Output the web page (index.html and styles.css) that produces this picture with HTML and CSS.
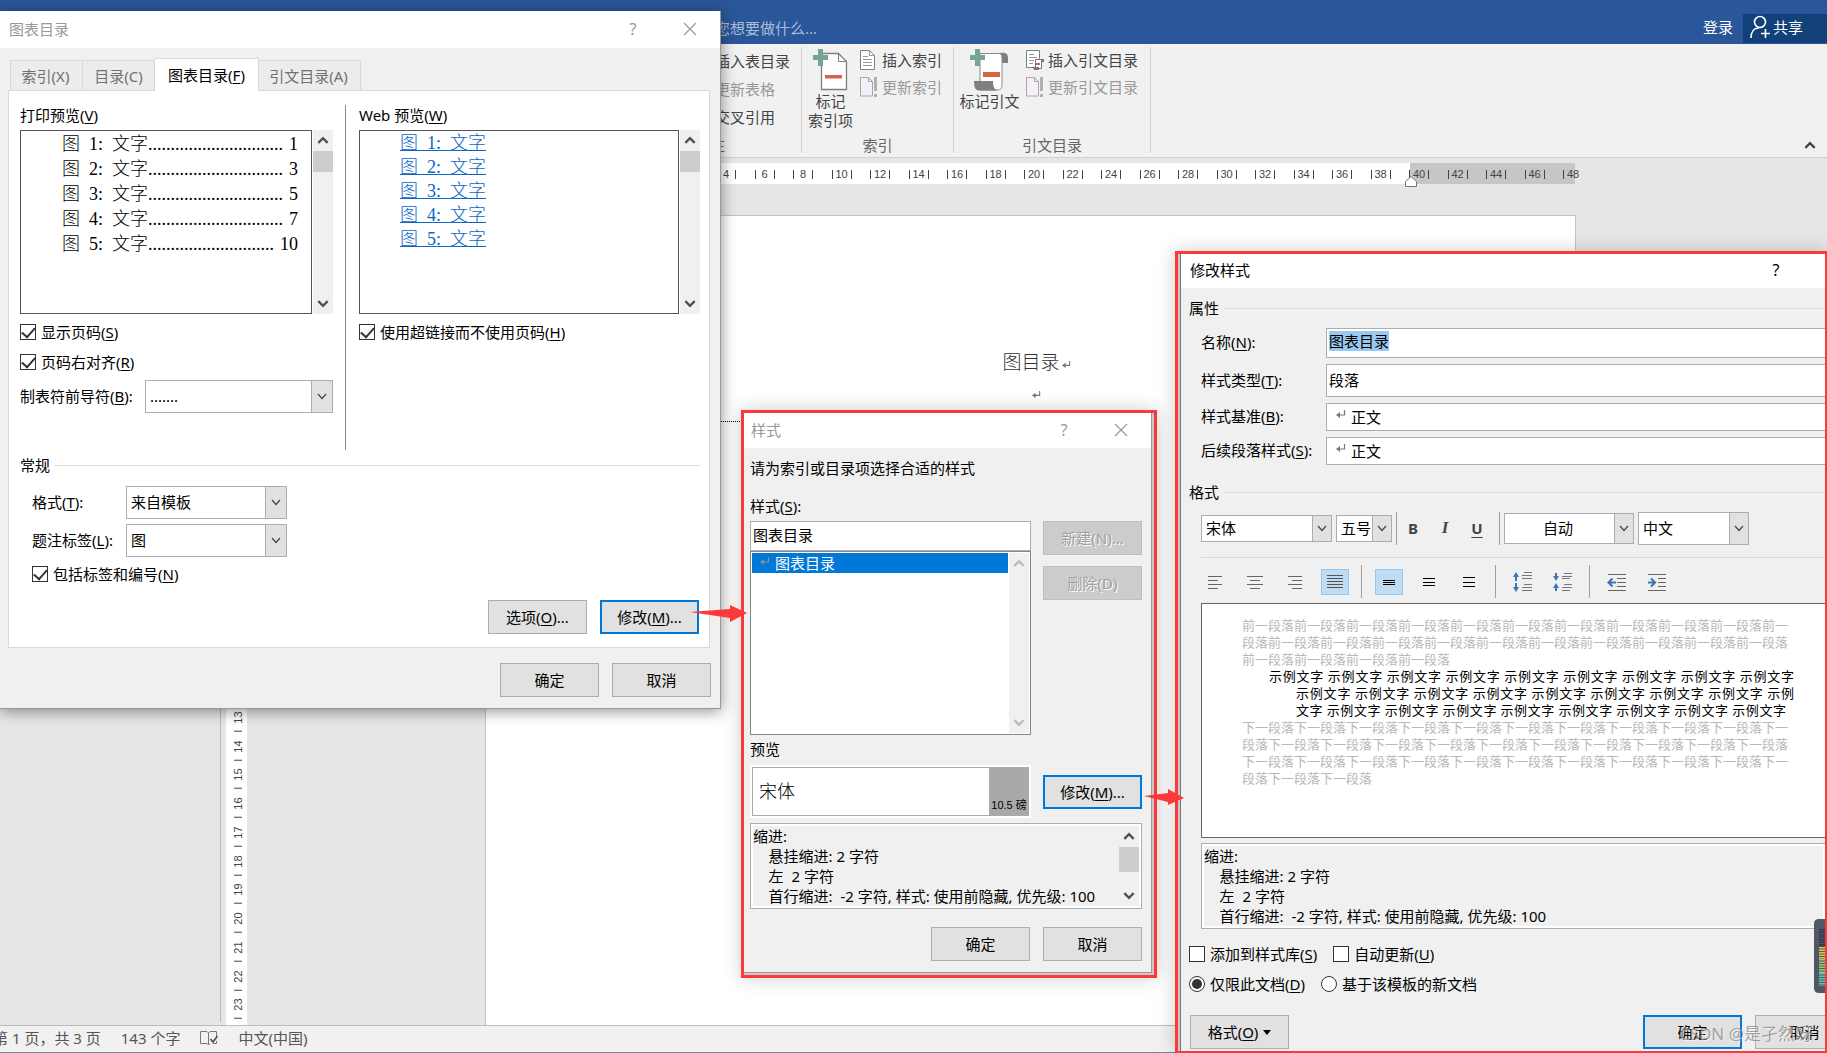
FILE: index.html
```html
<!DOCTYPE html>
<html lang="zh-CN">
<head>
<meta charset="utf-8">
<title>图表目录</title>
<link rel="stylesheet" href="styles.css">
</head>
<body>
<svg class="defs" aria-hidden="true">
  <symbol id="up" viewBox="0 0 12 12"><path d="M2 8.500 6 4.500l4 4" fill="none" stroke="currentColor" stroke-width="2"/></symbol>
  <symbol id="down" viewBox="0 0 12 12"><path d="M2 3.500 6 7.500l4-4" fill="none" stroke="currentColor" stroke-width="2"/></symbol>
  <symbol id="drop" viewBox="0 0 12 12"><path d="M2 3.500 6 8l4-4.500" fill="none" stroke="currentColor" stroke-width="1.200"/></symbol>
  <symbol id="close" viewBox="0 0 14 14"><path d="M1 1l12 12M13 1 1 13" fill="none" stroke="currentColor" stroke-width="1.200"/></symbol>
  <symbol id="ret" viewBox="0 0 10 10"><path d="M8.500 1v5H2" fill="none" stroke="currentColor" stroke-width="1.200"/><path d="M4 3v6L0 6z" fill="currentColor"/></symbol>
  <symbol id="update" viewBox="0 0 20 22"><path d="M1.500 1.500h8l4 4v14.500h-12z" fill="#f5eff7" stroke="#aaa5ab"/><path d="M9.500 1.500v4h4" fill="none" stroke="#aaa5ab"/><path d="M15 1h3v14h-3zM15 18h3v3h-3z" fill="#b0b0b0"/></symbol>
</svg>

<div class="word">
  <header class="titlebar">
    <span class="tell">您想要做什么...</span>
    <button class="signin">登录</button>
    <button class="share"><svg width="20" height="24" viewBox="0 0 20 24" fill="none" stroke="#fff" stroke-width="1.600"><circle cx="10" cy="7" r="5.500"/><path d="M1 23c0-6 3-10 8-10M15.500 14v9M11 18.500h9"/></svg>共享</button>
  </header>

  <div class="ribbon">
    <section class="group captions">
      <div class="tools"><button class="tool">插入表目录</button><button class="tool off">更新表格</button><button class="tool">交叉引用</button></div>
      <h2>题注</h2>
    </section>
    <section class="group index">
      <div class="cols">
        <button class="big"><svg width="36" height="44" viewBox="0 0 36 44"><path d="M8.500 5.500h17l8 8v28h-25z" fill="#fff" stroke="#7f7f7f" stroke-width="1.300"/><path d="M25.500 5.500v8h8" fill="none" stroke="#7f7f7f"/><path d="M12 27h17v3.500H12z" fill="#d86344"/><path d="M5 1h5v6h5v5h-5v6H5v-6H0V7h5z" fill="#75a694"/></svg><span>标记<br>索引项</span></button>
        <div class="tools">
          <button class="tool"><svg width="18" height="22" viewBox="0 0 18 22"><path d="M1.500 1.500h9l5 5v14h-14z" fill="#fff" stroke="#7f7f7f"/><path d="M10.500 1.500v5h5M4 7.500h5M4 10.500h9M4 13.500h9M4 16.500h9" fill="none" stroke="#999"/></svg>插入索引</button>
          <button class="tool off"><svg width="20" height="22"><use href="#update"/></svg>更新索引</button>
        </div>
      </div>
      <h2>索引</h2>
    </section>
    <section class="group cites">
      <div class="cols">
        <button class="big"><svg width="40" height="44" viewBox="0 0 40 44"><path d="M29 5c6-1 9 0 9 5v5h-6V9c0-2-1-3-3-4z" fill="#7f7f7f"/><path d="M9.500 5.500H30c1.500 1 2 3 2 5V37c0 3-1 5-5 5H10V5.500z" fill="#fff" stroke="#8a8a8a"/><path d="M4 33h19c0 5 1 8 4 9.500H9c-4 0-5-4-5-9.500z" fill="#7f7f7f"/><path d="M13 24h17v5H13z" fill="#d86344"/><path d="M5 1h5v6h5v5h-5v6H5v-6H0V7h5z" fill="#75a694"/></svg><span>标记引文</span></button>
        <div class="tools">
          <button class="tool"><svg width="20" height="22" viewBox="0 0 20 22"><path d="M1.500 1.500h13v17h-13z" fill="#fff" stroke="#7f7f7f"/><path d="M4 5.500h5M4 8.500h8M4 11.500h5M4 14.500h4" stroke="#999"/><path d="M10.500 10.500h8v2h-2v7h-6z" fill="#fff" stroke="#777"/><path d="M8 18h6v3H9zM16 10h3v3h-3z" fill="#777"/><path d="M11 14h4v2h-4z" fill="#d86344"/></svg>插入引文目录</button>
          <button class="tool off"><svg width="20" height="22"><use href="#update"/></svg>更新引文目录</button>
        </div>
      </div>
      <h2>引文目录</h2>
    </section>
    <button class="collapse" aria-label="折叠功能区"><svg width="14" height="14"><use href="#up"/></svg></button>
  </div>

  <main class="workspace">
    <aside class="nav"></aside>
    <div class="editor">
      <div class="hruler">
        <ol>
          <li><i></i><b>4</b><i></i></li><li><i></i><b>6</b><i></i></li><li><i></i><b>8</b><i></i></li><li><i></i><b>10</b><i></i></li><li><i></i><b>12</b><i></i></li><li><i></i><b>14</b><i></i></li><li><i></i><b>16</b><i></i></li><li><i></i><b>18</b><i></i></li><li><i></i><b>20</b><i></i></li><li><i></i><b>22</b><i></i></li><li><i></i><b>24</b><i></i></li><li><i></i><b>26</b><i></i></li><li><i></i><b>28</b><i></i></li><li><i></i><b>30</b><i></i></li><li><i></i><b>32</b><i></i></li><li><i></i><b>34</b><i></i></li><li><i></i><b>36</b><i></i></li><li><i></i><b>38</b><i></i></li><li><i></i><b>40</b><i></i></li><li><i></i><b>42</b><i></i></li><li><i></i><b>44</b><i></i></li><li><i></i><b>46</b><i></i></li>
        </ol>
        <div class="lastmark"><i></i><b>48</b></div>
        <svg class="indent" width="12" height="11" viewBox="0 0 12 11"><path d="M.5 10.500v-5l5.500-5 5.500 5v5z" fill="#fff" stroke="#777"/></svg>
      </div>
      <div class="canvas">
        <ol class="vruler"><li>13</li><li>14</li><li>15</li><li>16</li><li>17</li><li>18</li><li>19</li><li>20</li><li>21</li><li>22</li><li>23</li></ol>
        <article class="page">
          <p>图目录<svg width="9" height="9"><use href="#ret"/></svg></p>
          <p><svg width="9" height="9"><use href="#ret"/></svg></p>
          <hr>
        </article>
      </div>
    </div>
  </main>

  <footer class="status">
    <span>第 1 页，共 3 页</span><span>143 个字</span>
    <svg width="18" height="16" viewBox="0 0 18 16" fill="none" stroke="#777"><path d="M8.500 14V3L7 1.500H.5v12H7l1.500 1.500 1.500-1.500M8.500 3 10 1.500h6.500V6M13 13.500h3.500V11"/><path d="M10.500 9l2.500 3 4.500-6" stroke="#555" stroke-width="1.800"/></svg>
    <span>中文(中国)</span>
  </footer>
</div>

<section class="window toc">
  <header class="caption"><h1>图表目录</h1><button class="help">?</button><button class="x" aria-label="关闭"><svg width="14" height="14"><use href="#close"/></svg></button></header>
  <nav class="tabs"><button>索引(X)</button><button>目录(C)</button><button class="active">图表目录(<u>F</u>)</button><button>引文目录(A)</button></nav>
  <div class="panel">
    <div class="previews">
      <div class="left">
        <h3>打印预览(<u>V</u>)</h3>
        <div class="viewrow">
          <div class="view print">
            <p><span>图  1:  文字..............................</span><span>1</span></p>
            <p><span>图  2:  文字..............................</span><span>3</span></p>
            <p><span>图  3:  文字..............................</span><span>5</span></p>
            <p><span>图  4:  文字..............................</span><span>7</span></p>
            <p><span>图  5:  文字............................</span><span>10</span></p>
          </div>
          <div class="scroll"><svg width="14" height="14"><use href="#up"/></svg><i></i><svg width="14" height="14"><use href="#down"/></svg></div>
        </div>
        <label class="check"><input type="checkbox" checked><span>显示页码(<u>S</u>)</span></label>
        <label class="check"><input type="checkbox" checked><span>页码右对齐(<u>R</u>)</span></label>
        <div class="field leader"><label for="leader">制表符前导符(<u>B</u>):</label><span class="combo"><select id="leader"><option>.......</option></select><svg><use href="#drop"/></svg></span></div>
      </div>
      <div class="right">
        <h3>Web 预览(<u>W</u>)</h3>
        <div class="viewrow">
          <div class="view web">
            <a href="#">图  1:  文字</a><a href="#">图  2:  文字</a><a href="#">图  3:  文字</a><a href="#">图  4:  文字</a><a href="#">图  5:  文字</a>
          </div>
          <div class="scroll"><svg width="14" height="14"><use href="#up"/></svg><i></i><svg width="14" height="14"><use href="#down"/></svg></div>
        </div>
        <label class="check"><input type="checkbox" checked><span>使用超链接而不使用页码(<u>H</u>)</span></label>
      </div>
    </div>
    <h3 class="legend">常规</h3>
    <div class="general">
      <div class="field"><label for="fmt">格式(<u>T</u>):</label><span class="combo"><select id="fmt"><option>来自模板</option></select><svg><use href="#drop"/></svg></span></div>
      <div class="field"><label for="cap">题注标签(<u>L</u>):</label><span class="combo"><select id="cap"><option>图</option></select><svg><use href="#drop"/></svg></span></div>
      <label class="check"><input type="checkbox" checked><span>包括标签和编号(<u>N</u>)</span></label>
    </div>
    <div class="actions"><button class="btn">选项(<u>O</u>)...</button><button class="btn main">修改(<u>M</u>)...</button></div>
  </div>
  <div class="actions foot"><button class="btn">确定</button><button class="btn">取消</button></div>
</section>

<div class="frame styleframe">
  <section class="dialog style">
    <header class="caption"><h1>样式</h1><button class="help">?</button><button class="x" aria-label="关闭"><svg width="14" height="14"><use href="#close"/></svg></button></header>
    <p class="intro">请为索引或目录项选择合适的样式</p>
    <label class="lbl" for="sname">样式(<u>S</u>):</label>
    <div class="two">
      <div class="picker">
        <input id="sname" class="text" type="text" value="图表目录">
        <div class="list">
          <ul><li><svg width="10" height="10"><use href="#ret"/></svg>图表目录</li></ul>
          <div class="scroll dim"><svg width="14" height="14"><use href="#up"/></svg><svg width="14" height="14"><use href="#down"/></svg></div>
        </div>
      </div>
      <div class="stack"><button class="btn" disabled>新建(N)...</button><button class="btn" disabled>删除(D)</button></div>
    </div>
    <h3>预览</h3>
    <div class="two mid">
      <div class="sample"><span>宋体</span><small>10.5 磅</small></div>
      <button class="btn main">修改(<u>M</u>)...</button>
    </div>
    <div class="info"><pre>缩进:
    悬挂缩进: 2 字符
    左  2 字符
    首行缩进:  -2 字符, 样式: 使用前隐藏, 优先级: 100</pre>
      <div class="scroll"><svg width="14" height="14"><use href="#up"/></svg><i></i><svg width="14" height="14"><use href="#down"/></svg></div>
    </div>
    <div class="actions"><button class="btn">确定</button><button class="btn">取消</button></div>
  </section>
</div>

<div class="frame modframe">
  <section class="dialog modify">
    <header class="caption"><h1>修改样式</h1><button class="help">?</button></header>
    <h3 class="legend">属性</h3>
    <div class="props">
      <label for="name">名称(<u>N</u>):</label><div class="text h30"><mark id="name" contenteditable="true">图表目录</mark></div>
      <label for="type">样式类型(<u>T</u>):</label><select id="type" class="text h33"><option>段落</option></select>
      <label for="base">样式基准(<u>B</u>):</label><span class="marked"><select id="base" class="text h28"><option>正文</option></select><svg><use href="#ret"/></svg></span>
      <label for="next">后续段落样式(<u>S</u>):</label><span class="marked"><select id="next" class="text h28"><option>正文</option></select><svg><use href="#ret"/></svg></span>
    </div>
    <h3 class="legend fmt">格式</h3>
    <div class="bar fonts">
      <span class="combo face"><select aria-label="字体"><option>宋体</option></select><svg><use href="#drop"/></svg></span>
      <span class="combo size"><select aria-label="字号"><option>五号</option></select><svg><use href="#drop"/></svg></span>
      <i class="sep"></i>
      <span class="biu"><button class="bold">B</button><button class="ital">I</button><button class="undl">U</button></span>
      <i class="sep"></i>
      <span class="combo color"><select aria-label="颜色"><option>自动</option></select><svg><use href="#drop"/></svg></span>
      <span class="combo script"><select aria-label="文字"><option>中文</option></select><svg><use href="#drop"/></svg></span>
    </div>
    <div class="bar paras">
      <button aria-label="左对齐"><svg viewBox="0 0 20 20"><path d="M3 4.500h14M3 8.500h10M3 12.500h14M3 16.500h10" stroke="#666"/></svg></button>
      <button aria-label="居中"><svg viewBox="0 0 20 20"><path d="M2 4.500h16M5 8.500h10M2 12.500h16M5 16.500h10" stroke="#666"/></svg></button>
      <button aria-label="右对齐"><svg viewBox="0 0 20 20"><path d="M3 4.500h14M7 8.500h10M3 12.500h14M7 16.500h10" stroke="#666"/></svg></button>
      <button class="on" aria-label="两端对齐"><svg viewBox="0 0 20 20"><path d="M2 3.500h16M2 6.500h16M2 9.500h16M2 12.500h16M2 15.500h16" stroke="#555"/></svg></button>
      <i class="sep"></i>
      <button class="on" aria-label="单倍行距"><svg viewBox="0 0 20 20"><path d="M4 8.500h12M4 10.500h12M4 12.500h12" stroke="#000"/></svg></button>
      <button aria-label="1.5 倍行距"><svg viewBox="0 0 20 20"><path d="M4 6.500h12M4 10.500h12M4 13.500h12" stroke="#000"/></svg></button>
      <button aria-label="双倍行距"><svg viewBox="0 0 20 20"><path d="M4 5.500h12M4 10.500h12M4 14.500h12" stroke="#000"/></svg></button>
      <i class="sep"></i>
      <button aria-label="增加段落间距"><svg viewBox="0 0 20 20"><path d="M11 .5h8M9 3.500h10M9 6.500h10M11 12.500h8M9 15.500h10M9 18.500h10" stroke="#777"/><path d="M3 9V4M3 11v5" stroke="#3f75b3" stroke-width="2"/><path d="M0 5l3-5 3 5zM0 15l3 5 3-5z" fill="#3f75b3"/></svg></button>
      <button aria-label="减少段落间距"><svg viewBox="0 0 20 20"><path d="M11 1.500h8M9 4.500h10M9 6.500h8M11 12.500h8M9 15.500h10M9 18.500h8" stroke="#777"/><path d="M3 1v4M3 19v-4" stroke="#3f75b3" stroke-width="2"/><path d="M0 4l3 5 3-5zM0 16l3-5 3 5z" fill="#3f75b3"/></svg></button>
      <i class="sep"></i>
      <button aria-label="减少缩进"><svg viewBox="0 0 20 20"><path d="M1 2.500h18M10 6.500h9M10 10.500h9M10 14.500h9M1 18.500h18" stroke="#666"/><path d="M9 10.500H3M5.500 6.500l-4 4 4 4" stroke="#3f75b3" stroke-width="2.200" fill="none"/></svg></button>
      <button aria-label="增加缩进"><svg viewBox="0 0 20 20"><path d="M1 2.500h18M11 6.500h8M11 10.500h8M11 14.500h8M1 18.500h18" stroke="#666"/><path d="M1 10.500h6M4 6.500l4 4-4 4" stroke="#3f75b3" stroke-width="2.200" fill="none"/></svg></button>
    </div>
    <div class="textview">
      <p>前一段落前一段落前一段落前一段落前一段落前一段落前一段落前一段落前一段落前一段落前一</p>
      <p>段落前一段落前一段落前一段落前一段落前一段落前一段落前一段落前一段落前一段落前一段落</p>
      <p>前一段落前一段落前一段落前一段落</p>
      <p class="demo first">示例文字 示例文字 示例文字 示例文字 示例文字 示例文字 示例文字 示例文字 示例文字</p>
      <p class="demo">示例文字 示例文字 示例文字 示例文字 示例文字 示例文字 示例文字 示例文字 示例</p>
      <p class="demo last">文字 示例文字 示例文字 示例文字 示例文字 示例文字 示例文字 示例文字 示例文字</p>
      <p>下一段落下一段落下一段落下一段落下一段落下一段落下一段落下一段落下一段落下一段落下一</p>
      <p>段落下一段落下一段落下一段落下一段落下一段落下一段落下一段落下一段落下一段落下一段落</p>
      <p>下一段落下一段落下一段落下一段落下一段落下一段落下一段落下一段落下一段落下一段落下一</p>
      <p>段落下一段落下一段落</p>
    </div>
    <div class="info"><pre>缩进:
    悬挂缩进: 2 字符
    左  2 字符
    首行缩进:  -2 字符, 样式: 使用前隐藏, 优先级: 100</pre></div>
    <div class="opts"><label class="check"><input type="checkbox"><span>添加到样式库(<u>S</u>)</span></label><label class="check"><input type="checkbox"><span>自动更新(<u>U</u>)</span></label></div>
    <div class="opts"><label class="check"><input type="radio" name="scope" checked><span>仅限此文档(<u>D</u>)</span></label><label class="check"><input type="radio" name="scope"><span>基于该模板的新文档</span></label></div>
    <div class="actions"><button class="btn menu">格式(<u>O</u>)<svg width="8" height="5" viewBox="0 0 8 5"><path d="M0 0h8L4 5z"/></svg></button><button class="btn main">确定</button><button class="btn">取消</button></div>
  </section>
</div>

<svg class="arrow one" width="58" height="18" viewBox="0 0 58 18"><path d="M0 7l40-3V0l17 8-17 9v-4z" fill="#fd3838"/></svg>
<svg class="arrow two" width="40" height="17" viewBox="0 0 40 17"><path d="M0 7l24-3V0l16 9-16 7v-3z" fill="#fd3838"/></svg>
<svg class="meter" width="11" height="74" viewBox="0 0 11 74"><path d="M11 0H5Q0 0 0 5v64q0 5 5 5h6z" fill="#505766"/><g stroke-width="6" stroke-dasharray="1.500 1"><path d="M8 10v18" stroke="#343a49"/><path d="M8 28v12" stroke="#d9c94a"/><path d="M8 40v14" stroke="#9ccb6b"/><path d="M8 54v13" stroke="#62c3b0"/></g></svg>
<span class="watermark">CSDN @是孑然呀</span>
</body>
</html>
```
FILE: styles.css
```css
* { box-sizing: border-box; }
body {
  margin: 0;
  height: 100vh;
  overflow: hidden;
  position: relative;
  font: 15px/22px "Noto Sans", "Noto Sans CJK SC", sans-serif;
  color: #000;
}
h1, h2, h3, p, pre, ul, ol { margin: 0; padding: 0; font: inherit; list-style: none; }
button, input, select { font: inherit; color: inherit; margin: 0; padding: 0; border: 0; background: none; border-radius: 0; }
u { text-underline-offset: 2px; }
.defs { position: absolute; width: 0; height: 0; }

/* main window */
.word { height: 100%; display: flex; flex-direction: column; background: #e6e6e6; color: #444; }
.titlebar { flex: none; height: 44px; background: #2a579a; color: #fff; display: flex; align-items: flex-end; padding-bottom: 1px; }
.tell { margin-left: 715px; color: #a9bcd8; line-height: 30px; }
.signin { margin-left: auto; line-height: 31px; padding: 0 10px; }
.share { background: #124078; height: 29px; width: 84px; display: flex; align-items: center; gap: 3px; padding: 0 0 3px 7px; }
.ribbon { flex: none; height: 114px; background: #f1f1f1; border-bottom: 1px solid #d2d2d2; display: flex; padding: 3px 0 4px; }
.group { display: flex; flex-direction: column; justify-content: space-between; border-right: 1px solid #d2d2d2; }
.group h2 { line-height: 16px; text-align: center; color: #666; }
.cols { display: flex; }
.tools { display: flex; flex-direction: column; align-items: flex-start; }
.cols .tools { margin-top: -1px; }
.tool { display: flex; align-items: center; gap: 3px; height: 27px; white-space: nowrap; }
.off { color: #999; }
.captions { width: 802px; padding-left: 715px; }
.captions .tool { height: 28px; }
.captions h2 { text-align: left; margin-left: -20px; }
.index { width: 152px; }
.cites { width: 197px; }
.index .tool:first-child { gap: 5px; }
.big { width: 57px; display: flex; flex-direction: column; align-items: center; line-height: 19px; padding-top: 1px; }
.cites .big { width: 71px; }
.big span { white-space: nowrap; }
.collapse { margin-left: auto; align-self: flex-end; padding-right: 10px; height: 18px; }
.workspace { flex: 1; min-height: 0; display: flex; }
.nav { flex: none; width: 221px; border-right: 1px solid #b9b9b9; margin-bottom: 3px; }
.editor { flex: 1; display: flex; flex-direction: column; padding-left: 5px; min-width: 0; }
.hruler { position: relative; flex: none; display: flex; width: 1349px; height: 21px; margin-top: 5px; padding-left: 490px; background: linear-gradient(90deg, #fff 1184px, #c6c6c6 1184px); font: 11px/21px "Liberation Sans", sans-serif; }
.hruler ol { flex: none; width: 847px; display: grid; grid-template-columns: repeat(22, 1fr); }
.hruler li, .lastmark { display: flex; align-items: center; padding-top: 1px; }
.hruler i { width: 1px; height: 9px; background: #444; }
.hruler b { width: 18px; text-align: center; font-weight: 400; }
.indent { position: absolute; left: 1179px; top: 13px; }
.canvas { flex: 1; display: flex; min-height: 0; background: linear-gradient(#fff, #fff) 0 0 / 21px 100% no-repeat; }
.vruler { flex: none; width: 21px; padding-bottom: 6px; font: 11px/12px "Liberation Sans", sans-serif; display: grid; grid-template-rows: repeat(11, 1fr); height: 322px; align-self: flex-end; }
.vruler li { writing-mode: vertical-rl; transform: rotate(180deg); text-align: center; width: 12px; margin-left: 6px; background: linear-gradient(#444, #444) 2px 0 / 8px 1px no-repeat; }
.page { width: 1091px; margin: 31px 0 0 238px; padding-top: 131px; border: 1px solid #c3c3c3; border-bottom: 0; background: #fff; }
.page p { height: 30px; display: flex; justify-content: center; align-items: center; gap: 2px; padding-left: 12px; font-size: 19px; font-weight: 300; color: #333; }
.page svg { color: #777; margin-top: 4px; }
.page hr { width: 500px; margin: 14px 0 0 160px; border: 0; border-top: 1px dotted #000; }
.status { flex: none; height: 28px; border-top: 1px solid #bcbcbc; border-bottom: 1px solid #808090; background: #f1f1f1; color: #555; display: flex; align-items: center; gap: 20px; padding-bottom: 3px; white-space: nowrap; }
.status span:first-child { margin-left: -7px; }

/* shared dialog parts */
.caption { display: flex; align-items: center; background: #fff; height: 35px; padding-bottom: 2px; color: #999; }
.caption h1 { margin-right: auto; }
.help { width: 16px; font-size: 16px; }
.x { width: 14px; height: 14px; display: flex; margin: 0 23px 0 42px; }
.btn { flex: none; width: 99px; height: 34px; border: 1px solid #adadad; background: #e1e1e1; }
.btn.main { border: 2px solid #0078d7; }
.btn:disabled { background: #ccc; border-color: #bfbfbf; color: #a0a0a0; text-shadow: 1px 1px #fff; }
.actions { display: flex; justify-content: flex-end; gap: 13px; }
.check { display: flex; align-items: center; gap: 5px; height: 22px; white-space: nowrap; }
.check input { appearance: none; flex: none; width: 16px; height: 16px; border: 1px solid #333; background: #fff; display: grid; place-items: center; }
.check input[type=checkbox]:checked::before { content: ""; width: 11px; height: 6px; border: solid #333; border-width: 0 0 2px 2px; transform: rotate(-48deg); margin-bottom: 3px; }
.check input[type=radio] { border-radius: 50%; }
.check input[type=radio]:checked::before { content: ""; width: 10px; height: 10px; border-radius: 50%; background: #333; }
.combo { display: grid; height: 33px; }
.combo select { grid-area: 1 / 1; appearance: none; width: 100%; height: 100%; border: 1px solid #abadb3; background: #fff; padding: 0 4px 2px; }
.combo svg { grid-area: 1 / 1; justify-self: end; width: 22px; height: 100%; padding: 0 4px; border: 1px solid #abadb3; background: #e1e1e1; color: #444; pointer-events: none; }
.scroll { flex: none; width: 20px; background: #f0f0f0; color: #505050; display: flex; flex-direction: column; align-items: center; padding: 3px 0; }
.scroll i { width: 100%; height: 21px; margin-top: 4px; background: #cdcdcd; }
.scroll svg:last-child { margin-top: auto; }
.scroll.dim { color: #bbb; }
h3, .field label, .props label { line-height: 20px; padding-bottom: 2px; }
.legend { display: flex; align-items: center; gap: 5px; }
.legend::after { content: ""; flex: 1; border-top: 1px solid #dcdcdc; }
.text { border: 1px solid #abadb3; background: #fff; appearance: none; padding: 0 2px 2px; }
.info { display: flex; height: 86px; padding: 2px; border: 1px solid #abadb3; background: #fff; }
.info pre { flex: 1; background: #f0f0f0; line-height: 20px; overflow: hidden; }

/* table-of-figures dialog */
.window { position: absolute; left: 0; top: 11px; width: 721px; background: #f0f0f0; border: solid #999; border-width: 0 1px 1px 0; box-shadow: 0 2px 14px rgba(0, 0, 0, .45); padding-bottom: 11px; }
.toc .caption { height: 37px; padding-left: 9px; }
.tabs { display: flex; align-items: flex-end; margin: 10px 0 0 10px; height: 32px; }
.tabs button { height: 30px; width: 73px; border: 1px solid #d9d9d9; border-bottom: 0; background: #ececec; color: #707070; margin-right: -1px; }
.tabs button:first-child { padding-right: 2px; }
.tabs button:last-child { width: 103px; padding-right: 2px; }
.tabs .active { width: 105px; height: 33px; margin-bottom: -1px; background: #fff; color: #000; position: relative; }
.panel { margin: 0 10px 15px 8px; padding: 14px 9px 13px 11px; background: #fff; border: 1px solid #d9d9d9; }
.panel .actions { padding-right: 1px; }
.previews { display: flex; height: 345px; }
.left { width: 326px; padding-right: 12px; border-right: 1px solid #888; }
.right { flex: 1; padding-left: 13px; }
.viewrow { display: flex; height: 184px; gap: 1px; margin: 3px 0 7px; }
.view { flex: 1; border: 1px solid #555; font: 18px/25px "Liberation Serif", "Noto Sans CJK SC", serif; font-weight: 300; padding-top: 1px; }
.view p, .view a { white-space: pre; }
.print p { display: flex; justify-content: space-between; padding: 0 13px 0 41px; }
.web { display: flex; flex-direction: column; align-items: flex-start; line-height: 24px; padding: 0 0 0 40px; }
.web a { color: #0a67c4; }
.left .check + .check { margin: 8px 0 7px; }
.field { display: flex; align-items: center; }
.leader label { width: 125px; }
.leader .combo { width: 188px; }
.previews + .legend { margin-top: 5px; }
.general { padding: 9px 0 15px 12px; }
.general .field { margin-bottom: 5px; }
.general .field label { width: 94px; }
.general .combo { width: 161px; }
.general .check { margin-top: 6px; }
.foot { padding-right: 9px; }

/* annotation frames */
.frame { position: absolute; border: 3px solid #fd3838; background: #c8c8c8; box-shadow: 0 0 18px rgba(0, 0, 0, .2); }
.dialog { background: #f0f0f0; }
.styleframe { left: 741px; top: 410px; width: 416px; padding: 0 2px 2px 0; }
.style { border: solid #999; border-width: 0 1px 1px 0; padding: 0 9px 11px 6px; }
.style .caption { margin: 0 -9px 0 -6px; padding-left: 7px; }
.intro { margin: 9px 0 16px; }
.lbl { display: block; margin-bottom: 4px; }
.two { display: flex; gap: 12px; }
.mid { align-items: center; margin: 4px 0 5px; }
.picker, .sample { width: 281px; }
.picker .text { display: block; width: 100%; height: 30px; padding-bottom: 4px; }
.list { height: 184px; border: 1px solid #828790; background: #fff; padding: 1px; display: flex; }
.list ul { flex: 1; margin-right: 1px; }
.list li { height: 20px; line-height: 20px; background: #0078d7; color: #fff; display: flex; gap: 5px; padding-left: 8px; }
.list li svg { color: #8c8c8c; margin-top: 3px; }
.stack { display: grid; gap: 11px; align-content: start; }
.style h3 { margin-top: 4px; }
.sample { height: 53px; border: 2px solid #fff; display: flex; background: #fff; outline: 1px solid #aaa; outline-offset: -3px; }
.sample span { flex: 1; font-size: 18px; line-height: 48px; padding-left: 7px; font-weight: 300; }
.sample small { width: 40px; background: #a9a9a9; font: 11px/14px "Liberation Sans", "Noto Sans CJK SC", sans-serif; display: flex; align-items: flex-end; justify-content: center; padding-bottom: 4px; }
.style .info { margin-bottom: 18px; }
.style .info i { height: 25px; }

.modframe { left: 1175px; top: 251px; right: -1px; bottom: -1px; padding-left: 2px; overflow: hidden; }
.modify { border-left: 1px solid #777; height: 100%; padding-left: 8px; white-space: nowrap; }
.modify .caption { height: 34px; margin-left: -8px; padding: 0 41px 3px 9px; color: #000; }
.modify > .legend { margin: 10px 0 8px; }
.props { display: grid; grid-template-columns: 125px 1fr; gap: 6px 0; align-items: center; padding-left: 12px; }
.props .text { border-right: 0; width: 100%; }
.h30 { height: 30px; }
.h33 { height: 33px; }
.h28 { height: 28px; }
.text mark { background: #99c9ef; color: #000; display: inline-block; line-height: 20px; margin-top: 2px; }
.marked { display: grid; align-items: center; }
.marked > * { grid-area: 1 / 1; }
.props .marked select { padding: 0 0 0 24px; }
.marked svg { width: 10px; height: 10px; margin: 0 0 6px 10px; color: #777; }
.modify > .fmt { margin-top: 17px; }
.bar { display: flex; align-items: center; margin-left: 12px; }
.sep { width: 1px; height: 33px; background: #a0a0a0; flex: none; }
.fonts { height: 33px; }
.fonts .combo svg { width: 20px; padding: 0 3px; }
.face { width: 131px; height: 27px; margin-right: 4px; }
.size { width: 56px; height: 27px; margin-right: 4px; }
.biu { width: 102px; padding-right: 6px; display: flex; justify-content: space-around; color: #444; font-weight: 700; }
.biu button { width: 20px; line-height: 20px; padding-bottom: 2px; }
.ital { font-family: "Liberation Serif", serif; font-style: italic; font-size: 17px; }
.undl { text-decoration: underline; text-underline-offset: 3px; }
.color { width: 130px; height: 31px; margin: 0 4px; }
.color select { padding-left: 38px; }
.script { width: 111px; }
.paras { margin-top: 12px; border-top: 1px solid #d9d9d9; padding-top: 7px; height: 41px; margin-bottom: 5px; }
.paras button { width: 28px; height: 26px; margin-right: 12px; display: grid; place-items: center; }
.paras button svg { width: 20px; height: 20px; }
.paras .sep { margin-right: 13px; }
.paras .on { background: #c0dcf3; border: 1px solid #90c8f6; }
.textview { margin: 0 0 5px 12px; height: 235px; border: 1px solid #666; border-right: 0; background: #fff; padding: 12px 31px 0 40px; font: 13px/17px "Noto Sans CJK SC", sans-serif; color: #b8b8b8; }
.textview .demo { color: #000; padding-left: 54px; text-align: justify; text-align-last: justify; }
.textview .first { padding-left: 27px; }
.textview .last { padding-right: 8px; }
.modify .info { margin-left: 12px; border-right: 0; margin-bottom: 14px; }
.opts { display: flex; gap: 16px; margin-bottom: 8px; }
.modify .actions { margin: 20px -29px 0 1px; }
.menu { margin-right: auto; }
.menu svg { margin: 0 0 3px 5px; }

/* overlays */
.arrow { position: absolute; }
.one { left: 690px; top: 605px; }
.two.arrow { left: 1144px; top: 789px; }
.meter { position: absolute; right: 2px; top: 919px; }
.watermark { position: absolute; right: 15px; bottom: 8px; font-size: 17px; color: rgba(130, 130, 130, .7); text-shadow: 1px 1px rgba(255, 255, 255, .5); white-space: nowrap; }
```
